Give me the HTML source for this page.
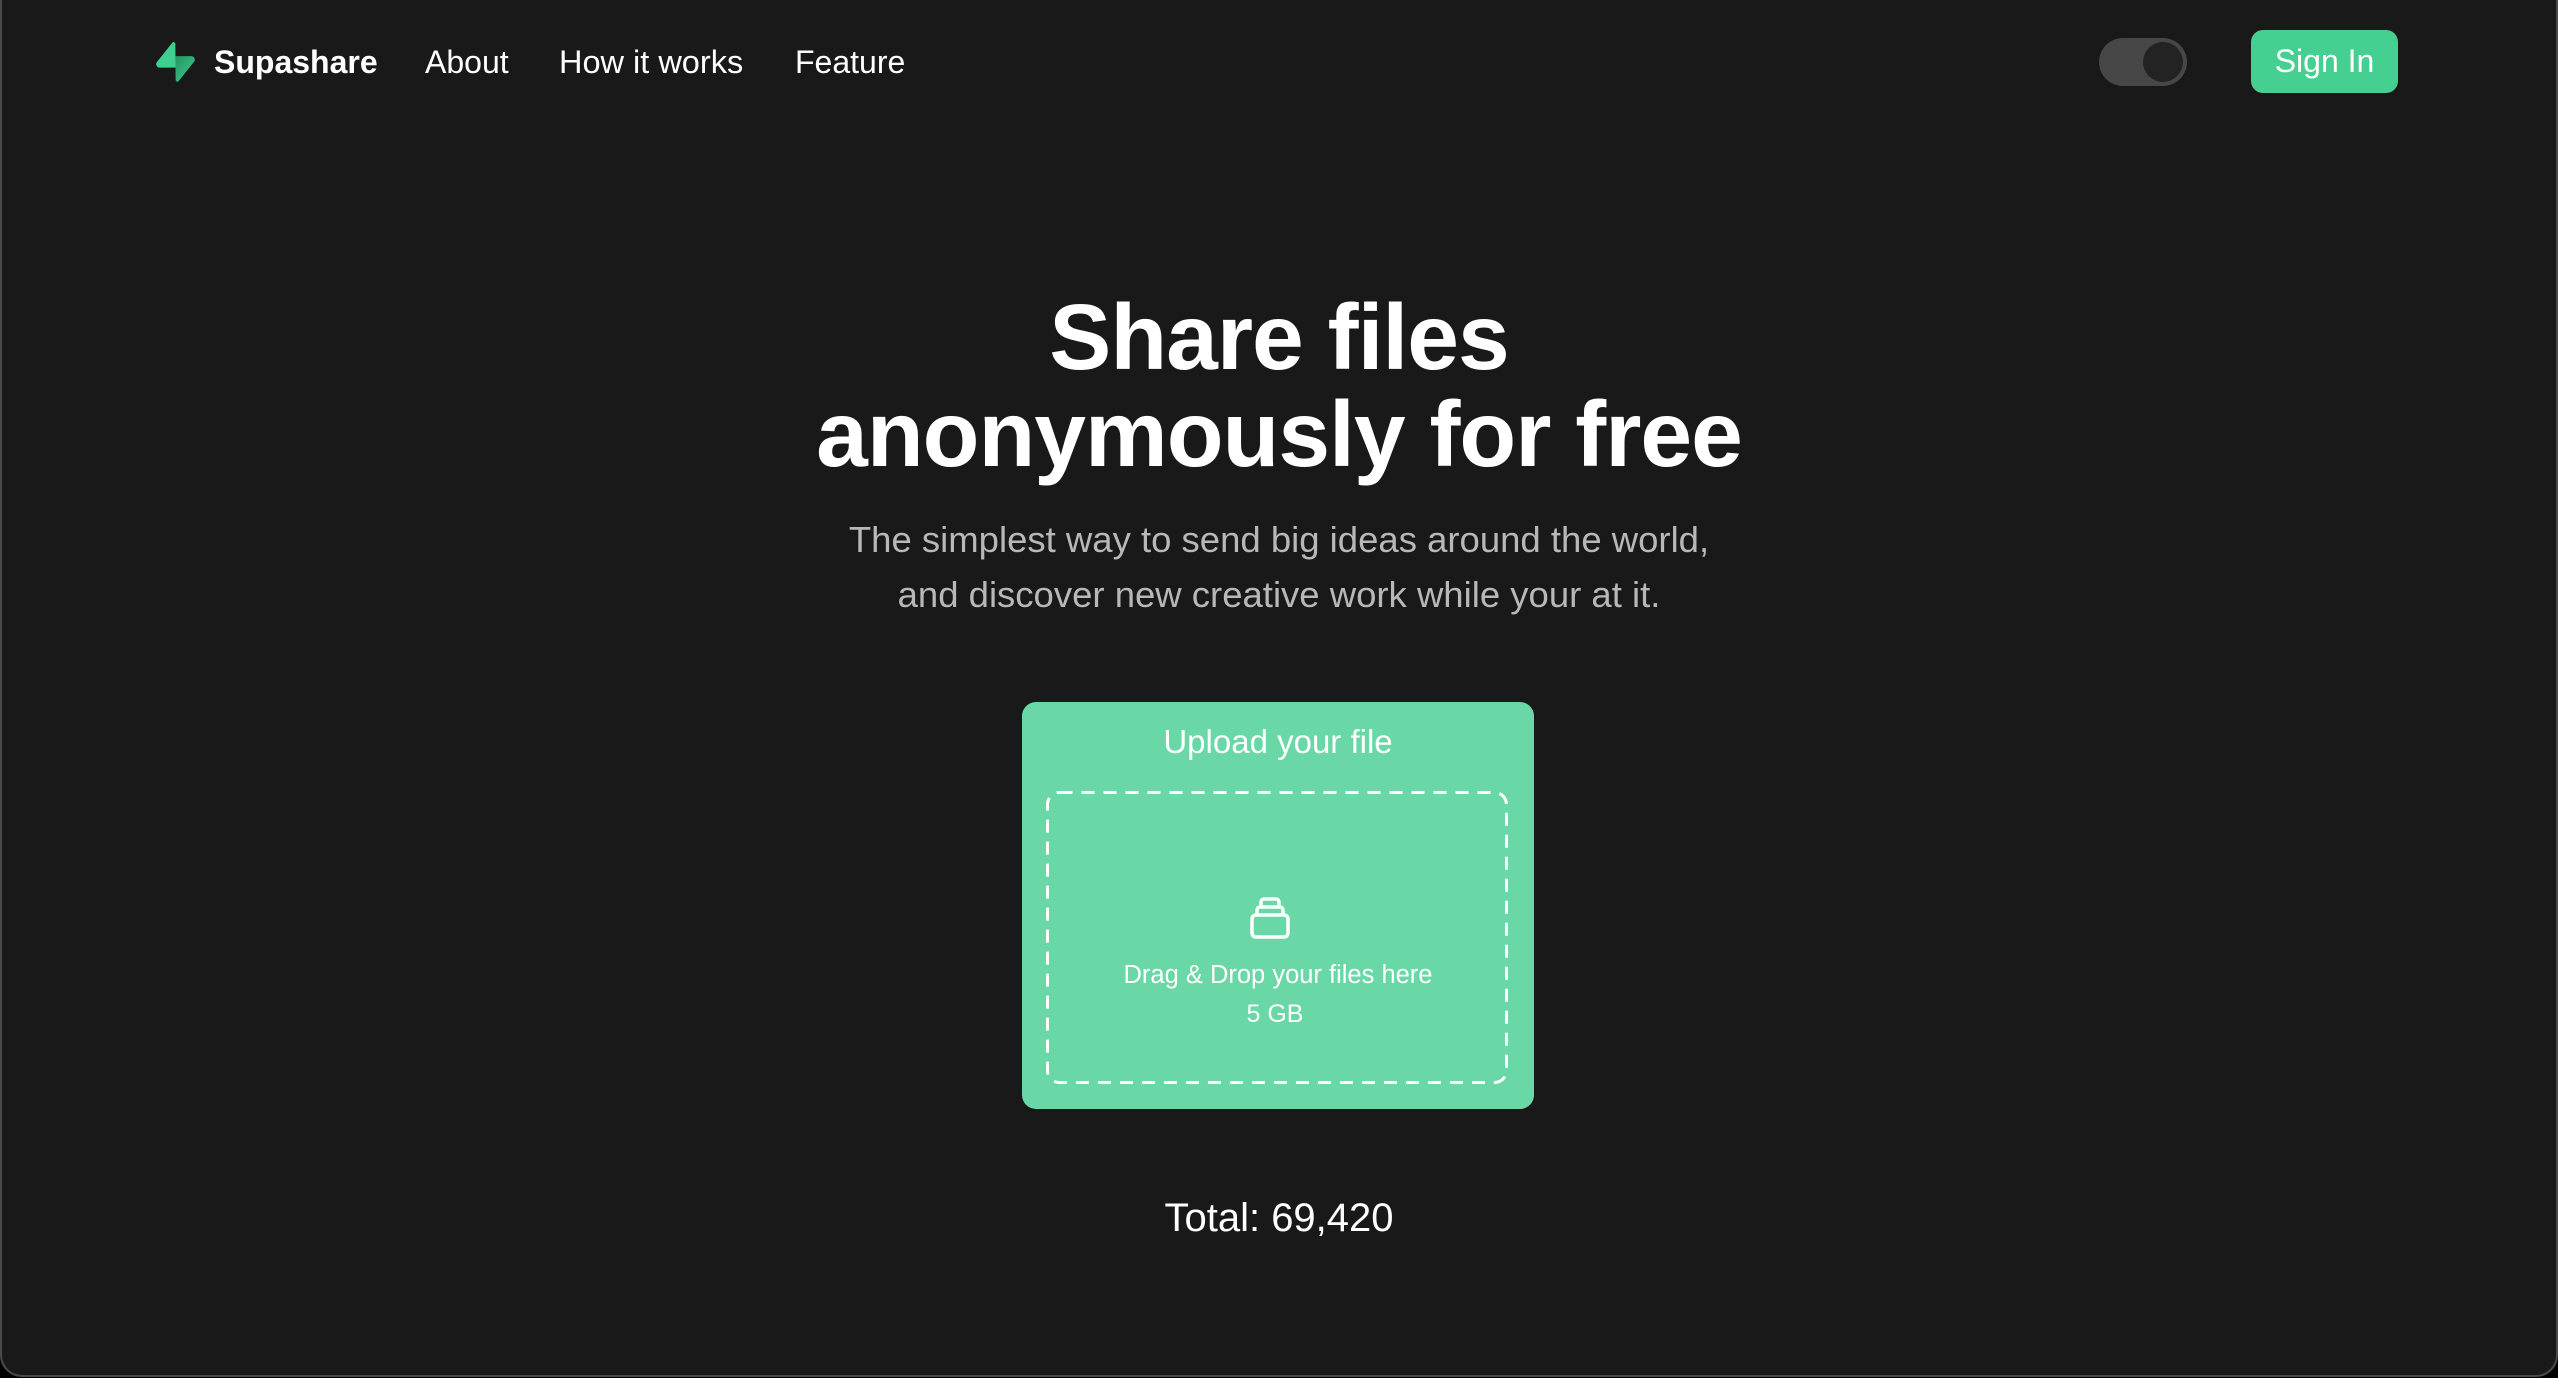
<!DOCTYPE html>
<html><head><meta charset="utf-8"><style>
html,body{margin:0;padding:0;background:#000;}
body{width:2558px;height:1378px;overflow:hidden;font-family:"Liberation Sans",Arial,sans-serif;}
.win{position:absolute;left:0;top:0;width:2554px;height:1375px;background:#191919;border:2px solid #4a4a4a;border-top:none;border-radius:0 0 22px 22px;}
.abs{position:absolute;white-space:nowrap;}
.nav{color:#fff;font-size:32px;top:42px;line-height:40px;}
.c{left:0;width:2558px;text-align:center;}
</style></head><body>
<div class="win"></div>
<svg class="abs" style="left:154px;top:42px" width="43" height="40" viewBox="0 0 109 113">
<defs><linearGradient id="g" x1="0" y1="0" x2="1" y2="1"><stop offset="0" stop-color="#249361"/><stop offset="1" stop-color="#3ecf8e"/></linearGradient></defs>
<path d="M63.7 110.3c-2.9 3.6-8.7 1.6-8.8-3l-1-67.3h45.3c8.2 0 12.8 9.5 7.7 15.9L63.7 110.3z" fill="url(#g)"/>
<path d="M45.3 2.1c2.9-3.6 8.7-1.6 8.8 3l.4 67.3H9.8c-8.2 0-12.8-9.5-7.7-15.9L45.3 2.1z" fill="#3ecf8e"/>
</svg>
<div class="abs nav" style="left:214px;font-weight:bold;">Supashare</div>
<div class="abs nav" style="left:425px;">About</div>
<div class="abs nav" style="left:559px;font-size:32.5px;">How it works</div>
<div class="abs nav" style="left:795px;">Feature</div>
<div class="abs" style="left:2099px;top:38px;width:88px;height:48px;border-radius:24px;background:#474747;"></div>
<div class="abs" style="left:2143px;top:42px;width:40px;height:40px;border-radius:50%;background:#232323;"></div>
<div class="abs" style="left:2251px;top:30px;width:147px;height:63px;border-radius:12px;background:#45cf91;color:#fff;font-size:32px;line-height:63px;text-align:center;">Sign In</div>
<div class="abs c" style="top:289px;color:#fff;font-weight:bold;font-size:93px;line-height:97px;letter-spacing:-1px;">Share files<br>anonymously for free</div>
<div class="abs c" style="top:512px;color:#b8b8b8;font-size:36.5px;line-height:55px;">The simplest way to send big ideas around the world,<br>and discover new creative work while your at it.</div>
<div class="abs" style="left:1022px;top:702px;width:512px;height:407px;border-radius:14px;background:#69d7a6;"></div>
<div class="abs" style="left:1022px;top:722px;width:512px;text-align:center;color:#fff;font-size:33px;line-height:40px;">Upload your file</div>
<svg class="abs" style="left:1046px;top:791px" width="462" height="293">
<rect x="1.5" y="1.5" width="459" height="290" rx="12" fill="none" stroke="#fff" stroke-width="3" stroke-dasharray="13 9"/>
</svg>
<svg class="abs" style="left:1250px;top:897px" width="40" height="42" viewBox="0 0 40 42" fill="none" stroke="#fff" stroke-width="3.5" stroke-linejoin="round">
<rect x="2" y="18" width="36" height="22" rx="4"/>
<path d="M7 18v-5a3 3 0 0 1 3-3h20a3 3 0 0 1 3 3v5"/>
<path d="M11 10V5a3 3 0 0 1 3-3h12a3 3 0 0 1 3 3v5"/>
</svg>
<div class="abs" style="left:1022px;top:960px;width:512px;text-align:center;color:#fff;font-size:25.5px;line-height:30px;">Drag &amp; Drop your files here</div>
<div class="abs" style="left:1019px;top:999px;width:512px;text-align:center;color:#fff;font-size:25px;line-height:30px;">5 GB</div>
<div class="abs c" style="top:1194px;color:#fff;font-size:40px;line-height:48px;">Total: 69,420</div>
</body></html>
